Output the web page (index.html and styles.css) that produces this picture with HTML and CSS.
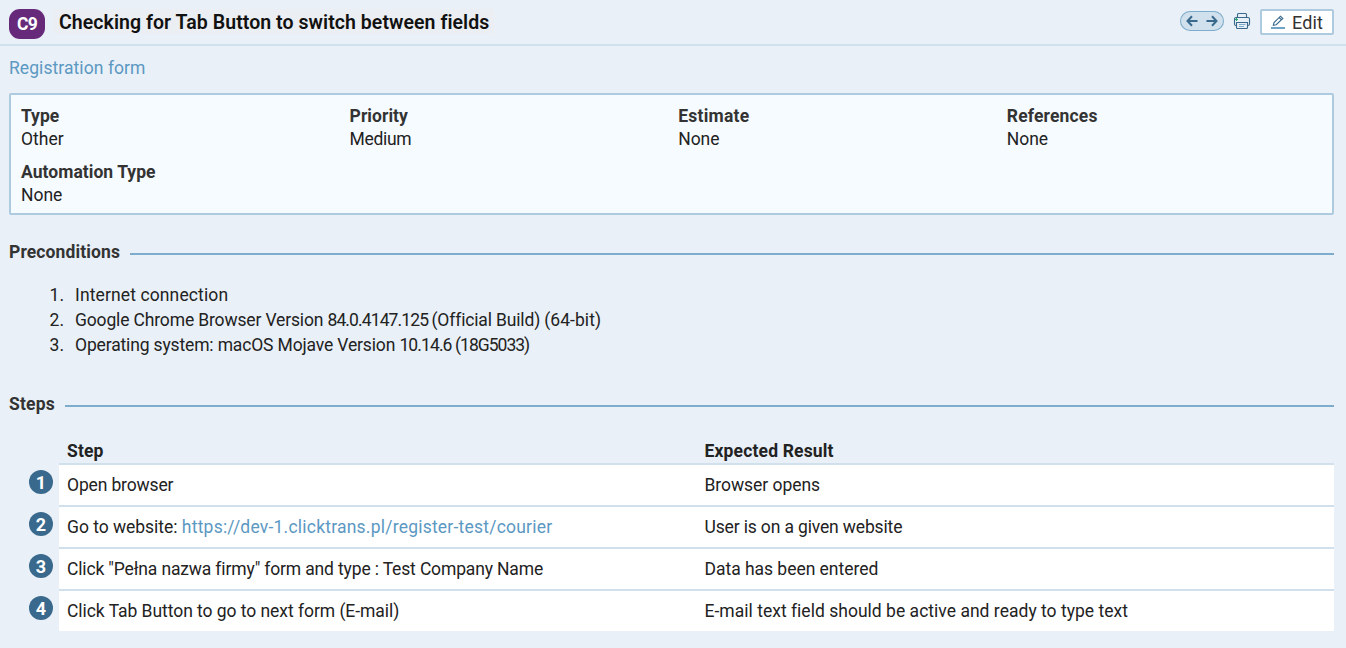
FILE: index.html
```html
<!DOCTYPE html>
<html lang="en">
<head>
<meta charset="utf-8">
<title>Checking for Tab Button to switch between fields</title>
<link rel="stylesheet" href="styles.css">
</head>
<body>
<header class="header">
  <span class="case-id">C9</span>
  <h1 class="title">Checking for Tab Button to switch between fields</h1>
  <div class="toolbar">
    <span class="pager">
      <svg width="44" height="20" viewBox="0 0 44 20" fill="none" stroke="#39698c" stroke-width="2"><path d="M17.5 10H8M12 5.3L7.5 10L12 14.7M26.5 10H36M32 5.3L36.5 10L32 14.7"/></svg>
    </span>
    <svg class="printer" width="18" height="18" viewBox="0 0 18 18" fill="none" stroke="#39698c" stroke-width="1.1"><path d="M4.500 5.500V2.500Q4.500 1.500 5.500 1.500H12.500Q13.500 1.500 13.500 2.500V5.500M3.500 13.500H3Q1.500 13.500 1.500 12V7Q1.500 5.500 3 5.500H15Q16.500 5.500 16.500 7V12Q16.500 13.500 15 13.500H14.500M3.500 10.500H14.500V15.500Q14.500 16.500 13.500 16.500H4.500Q3.500 16.500 3.500 15.500Z"/><path d="M6 12.500H12.500M6 14.500H11" stroke="#7eaccc"/><path d="M2 7.500H5M3.500 6V9" stroke="#2aa86a"/></svg>
    <button class="edit" type="button">
      <svg width="14" height="14" viewBox="0 0 14 14" fill="none"><path d="M2.3 10.3L3 7.5L9.500 1.200L11.800 3.500L5.200 9.700Z M8.200 2.500L10.500 4.800" stroke="#39698c" stroke-width="1.1"/><path d="M0 13H14" stroke="#6fa3c8" stroke-width="2"/></svg>
      <span>Edit</span>
    </button>
  </div>
</header>
<main class="content">
  <a class="section-link">Registration form</a>
  <dl class="fields">
    <div class="field"><dt class="ls-15">Type</dt><dd class="ls-30">Other</dd></div>
    <div class="field"><dt class="ls-30">Priority</dt><dd class="ls-n">Medium</dd></div>
    <div class="field"><dt class="ls-45">Estimate</dt><dd class="ls-20">None</dd></div>
    <div class="field"><dt class="ls-40">References</dt><dd class="ls-20">None</dd></div>
    <div class="field"><dt class="ls-30">Automation Type</dt><dd class="ls-20">None</dd></div>
  </dl>
  <h2 class="heading ls-35">Preconditions</h2>
  <ol class="preconditions">
    <li><span class="num">1.</span><span class="ls-35">Internet connection</span></li>
    <li><span class="num">2.</span><span class="ls-10">Google Chrome Browser Version <span class="ver">84.0.4147.125 </span><span class="ls-10">(Official Build) </span><span class="ls-30">(64-bit)</span></span></li>
    <li><span class="num">3.</span><span class="ls-10">Operating system: macOS Mojave Version <span class="ver">10.14.6 </span><span class="build">(18G5033)</span></span></li>
  </ol>
  <h2 class="heading ls-40">Steps</h2>
  <div class="steps">
    <div class="step-head"><span class="ls-35">Step</span><span class="ls-40">Expected Result</span></div>
    <div class="step"><span class="badge">1</span><div class="cells"><span class="ls-10">Open browser</span><span class="ls-15">Browser opens</span></div></div>
    <div class="step"><span class="badge">2</span><div class="cells"><span><span class="ls-20">Go to website:</span> <a class="link">https://dev-1.clicktrans.pl/register-test/courier</a></span><span class="ls-10">User is on a given website</span></div></div>
    <div class="step"><span class="badge">3</span><div class="cells"><span class="ls-10">Click "Pełna nazwa firmy" form and type : Test Company Name</span><span class="ls-20">Data has been entered</span></div></div>
    <div class="step"><span class="badge">4</span><div class="cells"><span class="ls-15">Click Tab Button to go to next form (E-mail)</span><span class="ls-25">E-mail text field should be active and ready to type text</span></div></div>
  </div>
</main>
</body>
</html>
```
FILE: styles.css
```css
* { box-sizing: border-box; }
body { margin: 0; height: 648px; background: #e9f0f7; color: #222; font: 17.5px/25px Roboto, "Liberation Sans", sans-serif; overflow: hidden; }
h1, h2, dl, dd, ol { margin: 0; padding: 0; }

.ls-n { letter-spacing: -0.35px; }
.ls-10 { letter-spacing: -0.15px; }
.ls-15 { letter-spacing: -0.05px; }
.ls-20 { letter-spacing: -0.03px; }
.ls-25 { letter-spacing: 0.02px; }
.ls-30 { letter-spacing: 0.04px; }
.ls-35 { letter-spacing: 0.12px; }
.ls-40 { letter-spacing: 0.16px; }
.ls-45 { letter-spacing: 0.25px; }
.ver { letter-spacing: -0.89px; }
.build { letter-spacing: -0.98px; }

.header { display: flex; align-items: flex-start; height: 46px; padding: 9px 12px 0 9px; border-bottom: 2px solid #d0e0ec; }
.case-id { width: 36px; height: 30px; border-radius: 11px; background: #672a7b; color: #fff; font-weight: 700; line-height: 31px; letter-spacing: -0.8px; text-align: center; }
.title { margin-left: 8px; padding: 0 5px 0 6px; height: 25px; background: #ebeef2; color: #111; font-size: 19.5px; font-weight: 600; line-height: 28px; letter-spacing: 0.06px; white-space: nowrap; }
.toolbar { display: flex; margin-left: auto; }
.pager { width: 44px; height: 20px; margin: 2px 9px 0 0; border-radius: 10px; background: #d0e0ec; box-shadow: inset 0 0 0 1px #7eaccc; }
.pager svg { display: block; }
.printer { margin: 3px 9px 0 0; }
.edit { display: flex; gap: 7px; width: 74px; height: 26px; padding: 4px 0 0 9px; border: 2px solid #aecadf; border-radius: 2px; background: #fff; color: #333; font: 18px/18px Roboto, sans-serif; letter-spacing: 0.15px; }
.edit span { margin-top: -1px; }

.content { padding: 10px 12px 0 9px; }
.section-link { display: block; color: #5b98c2; letter-spacing: 0.07px; }
.link { color: #5b98c2; letter-spacing: 0.22px; }

.fields { display: grid; grid-template-columns: repeat(4, 328.6px); row-gap: 8px; height: 122px; margin-top: 12px; padding: 10px 10px 8px; border: 2px solid #aecadf; border-radius: 2px; background: #f6fbff; line-height: 23px; }
.field { height: 48px; }
dt { font-weight: 700; color: #333; }

.heading { display: flex; align-items: center; gap: 10px; height: 25px; margin-top: 25px; color: #333; font-size: 17.5px; }
.heading::after { content: ""; flex: 1; height: 2px; margin-top: 2px; background: #7eaccc; }

.preconditions { list-style: none; margin: 18px 0 34px; }
.preconditions li { display: flex; }
.num { width: 55px; margin-right: 11px; text-align: right; }
.preconditions + .heading { margin-top: 0; }

.steps { margin-top: 22px; }
.step-head, .cells { display: grid; grid-template-columns: 637.5px 1fr; padding-left: 8px; }
.step-head { height: 24px; margin-left: 50px; font-weight: 700; }
.step { display: grid; grid-template-columns: 50px 1fr; }
.cells { height: 42px; line-height: 40px; border-top: 2px solid #d0e0ec; background: #fff; }
.badge { width: 24px; height: 24px; margin: 7px 0 0 20px; border-radius: 50%; background: #39698c; color: #fff; font-size: 18px; font-weight: 700; line-height: 25px; text-align: center; }
```
